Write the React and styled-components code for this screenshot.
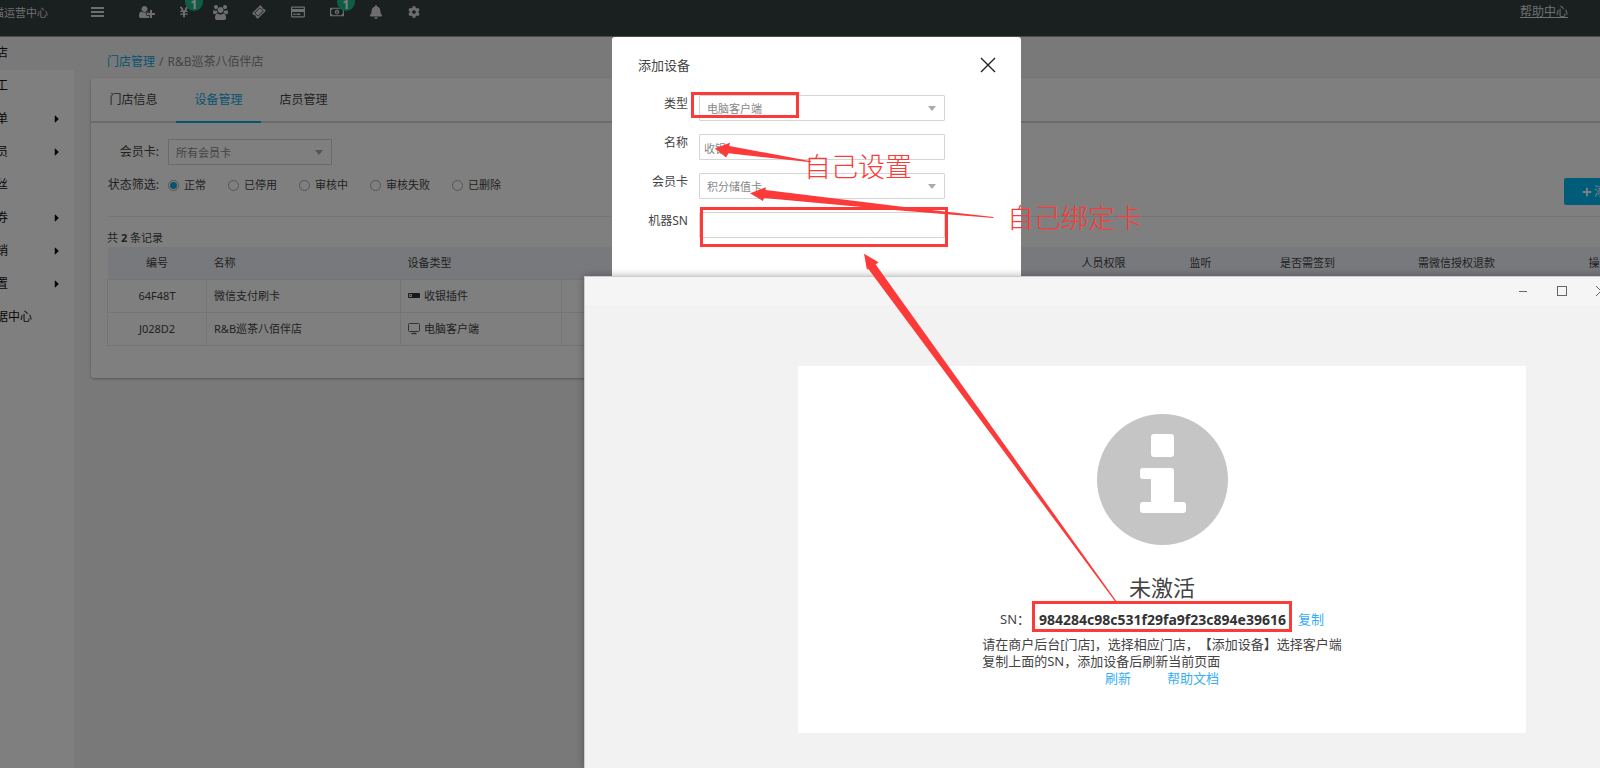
import styled, { createGlobalStyle, css } from "styled-components"
import {
    FaYenSign, FaTicketAlt, FaRegCreditCard,
    FaRegMoneyBillAlt, FaBell, FaCog, FaCaretRight, FaPlus,
} from "react-icons/fa"


const GlobalStyle = createGlobalStyle`
    * {
        box-sizing: border-box;
    }

    body {
        margin: 0;
        overflow: hidden;
        font-family: "Noto Sans", "Noto Sans CJK SC", sans-serif;
        font-size: 12px;
        line-height: 16px;
        color: #444;
        text-spacing-trim: space-all;
    }

    button, input, select {
        font: inherit;
        color: inherit;
    }

    a {
        text-decoration: none;
    }
`

const RED = "#fb3a39"

const Screen = styled.div`
    position: relative;
    min-height: 100vh;
    display: flex;
    flex-direction: column;
    background-color: #f3f3f3;
    overflow: hidden;
`

const Topbar = styled.header`
    height: 37px;
    display: flex;
    align-items: flex-start;
    background-color: #344040;
    border-bottom: 1px solid #999;
    color: #ddd;
`

const Brand = styled.div`
    width: 91px;
    padding-top: 5px;
    display: flex;
`

const BrandName = styled.span`
    margin-left: -7px;
    font-size: 11px;
    white-space: nowrap;
`

const IconButton = styled.button`
    position: relative;
    width: ${({ $wide }) => $wide ? "39px" : "37px"};
    height: 24px;
    padding: 0;
    border: 0;
    background: none;
    font-size: ${({ $small }) => $small ? "12px" : "14px"};
    display: flex;
    align-items: center;
    justify-content: center;
`

const MenuButton = styled(IconButton)`
    justify-content: flex-start;
`

const Badge = styled.span`
    position: absolute;
    left: 20px;
    top: 0;
    width: 18px;
    height: 11px;
    border-radius: 0 0 9px 9px;
    background-color: #20ba8c;
    color: #fff;
    font-size: 12px;
    font-weight: 700;
    line-height: 9px;
    text-align: center;
`

const HelpLink = styled.a`
    margin-left: auto;
    padding: 4px 32px 0 0;
    color: #ddd;
    text-decoration: underline;
`

const Body = styled.div`
    flex: 1;
    display: flex;
`

const Sidebar = styled.nav`
    width: 74px;
    flex-shrink: 0;
    background-color: #fff;
    overflow: hidden;
`

const SideItem = styled.a`
    height: 33px;
    margin-left: -16px;
    padding: 0 11px 1px 0;
    display: flex;
    align-items: center;
    justify-content: space-between;
    white-space: nowrap;
    color: #111;
    background-color: ${({ $active }) => $active ? "#f2f2f2" : "transparent"};
`

const Main = styled.main`
    flex: 1;
    min-width: 0;
    padding: 17px 0 0 17px;
    margin-right: -64px;
`

const Breadcrumb = styled.div`
    display: flex;
    gap: 4px;
    padding: 0 0 8px 16px;
    color: #888;
`

const BlueLink = styled.a`
    color: ${({ $light }) => $light ? "#36aef5" : "#10a8e0"};
`

const Card = styled.section`
    background-color: #fff;
    border-radius: 3px;
    box-shadow: 0 1px 3px rgba(0, 0, 0, 0.3);
`

const Tabs = styled.div`
    display: flex;
    height: 45px;
    border-bottom: 2px solid #d8d8d8;
`

const Tab = styled.button`
    width: 85px;
    height: 45px;
    padding: 0;
    border: 0;
    border-bottom: 2px solid transparent;
    background: none;

    ${({ $active }) => $active && css`
        color: #10a8e0;
        border-bottom-color: #10a8e0;
    `}
`

const CardBody = styled.div`
    padding: 16px 16px 32px;
`

const Filters = styled.form`
    display: flex;
    justify-content: space-between;
    align-items: flex-end;
    padding-bottom: 11px;
    border-bottom: 1px solid #eaeaea;
`

const FilterRow = styled.div`
    display: flex;
    align-items: center;
    height: ${({ $tall }) => $tall ? "26px" : "40px"};
`

const FilterLabel = styled.label`
    width: 52px;
    margin-right: 9px;
    text-align: right;
    white-space: nowrap;
`

const SelectBox = styled.span`
    position: relative;
    display: block;
    width: ${({ $fill }) => $fill ? "100%" : "164px"};

    &::after {
        content: "";
        position: absolute;
        right: 9px;
        top: 11px;
        border: 4px solid transparent;
        border-top: 5px solid #aaa;
        border-bottom: 0;
    }
`

const fieldStyle = css`
    width: 100%;
    height: 26px;
    border: 1px solid #d5d5d5;
    border-radius: 1px;
    background-color: transparent;
    color: #888;
    font-size: 11px;
    outline: none;
`

const Select = styled.select`
    ${fieldStyle}
    appearance: none;
    padding: 2px 7px 0;
`

const TextInput = styled.input`
    ${fieldStyle}
    padding: 2px 4px 0;
`

const RadioLabel = styled.label`
    display: flex;
    align-items: center;
    gap: 5px;
    margin-right: 22px;
    font-size: 11px;
`

const Radio = styled.input`
    appearance: none;
    width: 11px;
    height: 11px;
    margin: 0;
    border: 1px solid #aaa;
    border-radius: 50%;

    &:checked {
        background: radial-gradient(circle, #10a8e0 3px, transparent 4px);
    }
`

const AddButton = styled.button`
    width: 84px;
    height: 27px;
    padding: 0 0 0 18px;
    border: 0;
    border-radius: 2px;
    background-color: #00b8f0;
    color: #fff;
    display: flex;
    align-items: center;
    gap: 2px;
    white-space: nowrap;
`

const RecordCount = styled.p`
    margin: 0;
    padding: 13px 0 1px;
    font-size: 11px;
`

const Table = styled.table`
    width: 100%;
    table-layout: fixed;
    border-collapse: collapse;
    font-size: 11px;
`

const Th = styled.th`
    height: 32px;
    padding: 0 7px;
    background-color: #eff3f8;
    font-weight: 400;
    text-align: ${({ $left }) => $left ? "left" : "center"};
    white-space: nowrap;
`

const Td = styled.td`
    height: 33px;
    padding: 0 7px;
    border: 1px solid #eaeaea;
    text-align: ${({ $left }) => $left ? "left" : "center"};
`

const DeviceType = styled.span`
    display: flex;
    align-items: center;
    gap: 4px;
`

const Overlay = styled.div`
    position: absolute;
    inset: 0;
    display: flex;
    justify-content: center;
    align-items: flex-start;
    padding: 37px 0 0 33px;
    background-color: rgba(0, 0, 0, 0.5);
`

const Modal = styled.section`
    width: 409px;
    min-height: 300px;
    padding: 20px 25px 0 26px;
    border-radius: 3px;
    background-color: #fff;
`

const ModalHead = styled.header`
    display: flex;
    justify-content: space-between;
    align-items: center;
    height: 16px;
    margin-bottom: 22px;
`

const ModalTitle = styled.h2`
    margin: 0;
    font-size: 13px;
    font-weight: 400;
`

const CloseButton = styled.button`
    width: 16px;
    height: 16px;
    padding: 0;
    border: 0;
    background: none;
    display: flex;
`

const Field = styled.div`
    display: grid;
    grid-template-columns: 50px 246px;
    column-gap: 11px;
    margin-bottom: 13px;
`

const FieldLabel = styled.label`
    padding-top: 1px;
    text-align: right;
`

const Client = styled.section`
    position: absolute;
    left: 584px;
    right: -140px;
    top: 276px;
    bottom: 0;
    display: flex;
    flex-direction: column;
    background-color: #f2f2f2;
    border: 1px solid #ccc;
    border-bottom: 0;
    box-shadow: 0 0 8px rgba(0, 0, 0, 0.3);
`

const TitleBar = styled.header`
    height: 28px;
    flex-shrink: 0;
    display: flex;
    justify-content: flex-end;
    gap: 27px;
    padding-right: 132px;
    background-color: #f5f5f5;
`

const WindowButton = styled.button`
    width: 12px;
    padding: 0;
    border: 0;
    background: none;
    display: flex;
    align-items: center;
    justify-content: center;
`

const ClientBody = styled.div`
    flex: 1;
    display: flex;
    padding: 61px 213px 35px;
`

const Panel = styled.div`
    flex: 1;
    padding-top: 48px;
    display: flex;
    flex-direction: column;
    align-items: center;
    background-color: #fff;
    font-size: 13px;
    line-height: 17px;
`

const StatusTitle = styled.h1`
    margin: 28px 0 6px;
    font-size: 22px;
    line-height: 28px;
    font-weight: 400;
`

const SerialRow = styled.div`
    display: flex;
    align-items: center;
    height: 24px;
    margin-bottom: 5px;
`

const Serial = styled.strong`
    margin: 0 12px 0 9px;
    font-size: 14px;
    color: #333;
`

const Hint = styled.p`
    margin: 0;
    white-space: nowrap;
`

const Links = styled.div`
    display: flex;
    gap: 36px;
`

const Marks = styled.div`
    position: absolute;
    inset: 0;
    pointer-events: none;
`

const MarkBox = styled.div`
    position: absolute;
    left: ${({ $x }) => $x}px;
    top: ${({ $y }) => $y}px;
    width: ${({ $w }) => $w}px;
    height: ${({ $h }) => $h}px;
    border: 3px solid ${RED};
`

const MarkText = styled.span`
    position: absolute;
    left: ${({ $x }) => $x}px;
    top: ${({ $y }) => $y}px;
    font-size: 27px;
    line-height: 32px;
    font-weight: 300;
    color: ${RED};
    white-space: nowrap;
`

const Arrows = styled.svg`
    position: absolute;
    left: 0;
    top: 0;
    fill: ${RED};
`


const tools = [
    { name: "会员", Icon: UserPlusIcon },
    { name: "收款", Icon: FaYenSign, badge: 1, small: true },
    { name: "粉丝", Icon: UsersIcon },
    { name: "卡券", Icon: TicketIcon, wide: true, small: true },
    { name: "储值卡", Icon: FaRegCreditCard, wide: true },
    { name: "提现", Icon: FaRegMoneyBillAlt, badge: 1, wide: true },
    { name: "通知", Icon: FaBell, wide: true },
    { name: "设置", Icon: FaCog, small: true },
]

const menu = [
    { name: "门店", active: true },
    { name: "员工" },
    { name: "订单", more: true },
    { name: "会员", more: true },
    { name: "粉丝" },
    { name: "卡券", more: true },
    { name: "营销", more: true },
    { name: "设置", more: true },
    { name: "数据中心" },
]

const states = ["正常", "已停用", "审核中", "审核失败", "已删除"]

const devices = [
    { id: "64F48T", name: "微信支付刷卡", type: "收银插件", Icon: PluginIcon },
    { id: "J028D2", name: "R&B巡茶八佰伴店", type: "电脑客户端", Icon: MonitorIcon },
]

function BarsIcon(){
    return (
        <svg width="13" height="12" viewBox="0 0 13 12" fill="currentColor">
            <path d="M0 1h13v2H0zM0 5h13v2H0zM0 9h13v2H0z" />
        </svg>
    )
}

function UserPlusIcon(){
    return (
        <svg width="16" height="14" viewBox="0 0 2048 1792" fill="currentColor">
            <path d="M704 896q-159 0-271.5-112.5T320 512t112.5-271.5T704 128t271.5 112.5T1088 512 975.5 783.5 704 896zm960 128h352q13 0 22.5 9.5t9.5 22.5v192q0 13-9.5 22.5t-22.5 9.5h-352v352q0 13-9.5 22.5t-22.5 9.5h-192q-13 0-22.5-9.5t-9.5-22.5v-352h-352q-13 0-22.5-9.5t-9.5-22.5v-192q0-13 9.5-22.5t22.5-9.5h352V672q0-13 9.5-22.5t22.5-9.5h192q13 0 22.5 9.5t9.5 22.5v352zm-736 224q0 52 38 90t90 38h256v238q-68 50-171 50H267q-121 0-194-69T0 1405q0-53 3.5-103.5t14-109T44 1084t43-97.5 62-81 85.5-53.5T346 832q19 0 39 17 79 61 154.5 91.5T704 971t164.5-30.5T1023 849q20-17 39-17 132 0 217 96h-223q-52 0-90 38t-38 90v192z" />
        </svg>
    )
}

function UsersIcon(){
    return (
        <svg width="15" height="15" viewBox="0 0 1920 1920" fill="currentColor">
            <path d="M593 1024q-162 5-265 128H194q-82 0-138-40.5T0 993q0-353 124-353 6 0 43.5 21t97.5 42.5T384 725q67 0 133-23-5 37-5 66 0 139 81 256zm1071 637q0 120-73 189.5t-194 69.5H523q-121 0-194-69.5T256 1661q0-53 3.5-103.5t14-109T300 1340t43-97.5 62-81 85.5-53.5T602 1088q10 0 43 21.5t73 48 107 48 135 21.5 135-21.5 107-48 73-48 43-21.5q61 0 111.5 20t85.5 53.5 62 81 43 97.5 26.5 108.5 14 109 3.5 103.5zM640 256q0 106-75 181t-181 75-181-75-75-181 75-181T384 0t181 75 75 181zm704 384q0 159-112.5 271.5T960 1024 688.5 911.5 576 640t112.5-271.5T960 256t271.5 112.5T1344 640zm576 353q0 78-56 118.5t-138 40.5h-134q-103-123-265-128 81-117 81-256 0-29-5-66 66 23 133 23 59 0 119-21.5t97.5-42.5 43.5-21q124 0 124 353zM1792 256q0 106-75 181t-181 75-181-75-75-181 75-181 181-75 181 75 75 181z" />
        </svg>
    )
}

function TicketIcon(){
    return <FaTicketAlt transform="rotate(-45)" />
}

function PluginIcon(){
    return (
        <svg width="12" height="12" viewBox="0 0 12 12">
            <rect x="0" y="3" width="12" height="5" rx="1" fill="#333" />
            <rect x="1" y="4" width="3" height="3" fill="#ddd" />
            <rect x="2" y="5" width="1" height="1" fill="#333" />
        </svg>
    )
}

function MonitorIcon(){
    return (
        <svg width="12" height="12" viewBox="0 0 12 12" fill="none" stroke="#666">
            <rect x="0.5" y="0.5" width="11" height="8" rx="1" />
            <path d="M3.5 10.5h5" strokeWidth="1.5" />
        </svg>
    )
}

function InfoIcon(){
    return (
        <svg width="131" height="131" viewBox="0 0 131 131">
            <circle cx="65.5" cy="65.5" r="65.5" fill="#c5c5c5" />
            <g fill="#fff">
                <rect x="54" y="20" width="23" height="23" rx="3" />
                <path d="M46 54h28a3 3 0 0 1 3 3v31h9a3 3 0 0 1 3 3v5a3 3 0 0 1-3 3H46a3 3 0 0 1-3-3v-5a3 3 0 0 1 3-3h8V65h-8a3 3 0 0 1-3-3v-5a3 3 0 0 1 3-3z" />
            </g>
        </svg>
    )
}

function StorePage(){
    return (
        <>
            <Topbar>
                <Brand><BrandName>猫运营中心</BrandName></Brand>
                <MenuButton aria-label="菜单"><BarsIcon /></MenuButton>
                {tools.map(({ name, Icon, badge, wide, small }) => (
                    <IconButton key={name} aria-label={name} $wide={wide} $small={small}>
                        <Icon />
                        {badge && <Badge>{badge}</Badge>}
                    </IconButton>
                ))}
                <HelpLink href="#help">帮助中心</HelpLink>
            </Topbar>
            <Body>
                <Sidebar>
                    {menu.map(({ name, active, more }) => (
                        <SideItem key={name} href="#menu" $active={active}>
                            {name}
                            {more && <FaCaretRight size={12} />}
                        </SideItem>
                    ))}
                </Sidebar>
                <Main>
                    <Breadcrumb>
                        <BlueLink href="#stores">门店管理</BlueLink>
                        <span>/</span>
                        <span>R&B巡茶八佰伴店</span>
                    </Breadcrumb>
                    <Card>
                        <Tabs>
                            <Tab>门店信息</Tab>
                            <Tab $active>设备管理</Tab>
                            <Tab>店员管理</Tab>
                        </Tabs>
                        <CardBody>
                            <Filters>
                                <div>
                                    <FilterRow $tall>
                                        <FilterLabel htmlFor="card">会员卡:</FilterLabel>
                                        <SelectBox>
                                            <Select id="card"><option>所有会员卡</option></Select>
                                        </SelectBox>
                                    </FilterRow>
                                    <FilterRow>
                                        <FilterLabel as="span">状态筛选:</FilterLabel>
                                        {states.map((state, i) => (
                                            <RadioLabel key={state}>
                                                <Radio type="radio" name="state" defaultChecked={i === 0} />
                                                {state}
                                            </RadioLabel>
                                        ))}
                                    </FilterRow>
                                </div>
                                <AddButton type="button"><FaPlus size={10} />添加设备</AddButton>
                            </Filters>
                            <RecordCount>共 <b>2</b> 条记录</RecordCount>
                            <Table>
                                <colgroup>
                                    <col width="99" />
                                    <col width="194" />
                                    <col width="161" />
                                    <col />
                                    <col width="88" />
                                    <col width="106" />
                                    <col width="108" />
                                    <col width="190" />
                                    <col width="96" />
                                </colgroup>
                                <thead>
                                    <tr>
                                        <Th>编号</Th>
                                        <Th $left>名称</Th>
                                        <Th $left>设备类型</Th>
                                        <Th />
                                        <Th>人员权限</Th>
                                        <Th>监听</Th>
                                        <Th>是否需签到</Th>
                                        <Th>需微信授权退款</Th>
                                        <Th>操作</Th>
                                    </tr>
                                </thead>
                                <tbody>
                                    {devices.map(({ id, name, type, Icon }) => (
                                        <tr key={id}>
                                            <Td>{id}</Td>
                                            <Td $left>{name}</Td>
                                            <Td $left><DeviceType><Icon />{type}</DeviceType></Td>
                                            <Td />
                                            <Td />
                                            <Td />
                                            <Td />
                                            <Td />
                                            <Td />
                                        </tr>
                                    ))}
                                </tbody>
                            </Table>
                        </CardBody>
                    </Card>
                </Main>
            </Body>
        </>
    )
}

function AddDeviceModal(){
    return (
        <Overlay>
            <Modal role="dialog" aria-labelledby="modal-title">
                <ModalHead>
                    <ModalTitle id="modal-title">添加设备</ModalTitle>
                    <CloseButton aria-label="关闭">
                        <svg width="16" height="16" viewBox="0 0 16 16" stroke="#222" strokeWidth="1.4">
                            <path d="M1 1l14 14M15 1L1 15" />
                        </svg>
                    </CloseButton>
                </ModalHead>
                <Field>
                    <FieldLabel htmlFor="type">类型</FieldLabel>
                    <SelectBox $fill>
                        <Select id="type"><option>电脑客户端</option></Select>
                    </SelectBox>
                </Field>
                <Field>
                    <FieldLabel htmlFor="name">名称</FieldLabel>
                    <TextInput id="name" defaultValue="收银" />
                </Field>
                <Field>
                    <FieldLabel htmlFor="member">会员卡</FieldLabel>
                    <SelectBox $fill>
                        <Select id="member"><option>积分储值卡</option></Select>
                    </SelectBox>
                </Field>
                <Field>
                    <FieldLabel htmlFor="sn">机器SN</FieldLabel>
                    <TextInput id="sn" />
                </Field>
            </Modal>
        </Overlay>
    )
}

function ClientWindow(){
    return (
        <Client>
            <TitleBar>
                <WindowButton aria-label="最小化">
                    <svg width="10" height="10" stroke="#666"><path d="M1 5.5h8" /></svg>
                </WindowButton>
                <WindowButton aria-label="最大化">
                    <svg width="10" height="10" fill="none" stroke="#666"><rect x="0.5" y="0.5" width="9" height="9" /></svg>
                </WindowButton>
                <WindowButton aria-label="关闭">
                    <svg width="10" height="10" stroke="#666"><path d="M0 0l10 10M10 0L0 10" /></svg>
                </WindowButton>
            </TitleBar>
            <ClientBody>
                <Panel>
                    <InfoIcon />
                    <StatusTitle>未激活</StatusTitle>
                    <SerialRow>
                        SN：
                        <Serial>984284c98c531f29fa9f23c894e39616</Serial>
                        <BlueLink $light href="#copy">复制</BlueLink>
                    </SerialRow>
                    <Hint>
                        请在商户后台[门店]，选择相应门店，【添加设备】选择客户端<br />
                        复制上面的SN，添加设备后刷新当前页面
                    </Hint>
                    <Links>
                        <BlueLink $light href="#refresh">刷新</BlueLink>
                        <BlueLink $light href="#docs">帮助文档</BlueLink>
                    </Links>
                </Panel>
            </ClientBody>
        </Client>
    )
}

export default function App(){
    return (
        <Screen>
            <GlobalStyle />
            <StorePage />
            <AddDeviceModal />
            <ClientWindow />
            <Marks>
                <MarkBox $x={691} $y={92} $w={108} $h={26} />
                <MarkBox $x={700} $y={207} $w={248} $h={40} />
                <MarkBox $x={1032} $y={601} $w={260} $h={31} />
                <Arrows width="1200" height="640">
                    <path d="M715 148.3L730 142.7L729.3 146L811 161.2V162.2L728.5 153.3L726 157.5Z" />
                    <path d="M750 193.3L765.7 187.3V190L900 206.5L993.5 217V218L900 210.5L764 198L763 201Z" />
                    <path d="M864 253.7L878.5 262.3L875.7 264.5L1117 602H1115.5L868 268.5L867 270Z" />
                </Arrows>
                <MarkText $x={804} $y={151}>自己设置</MarkText>
                <MarkText $x={1007} $y={202}>自己绑定卡</MarkText>
            </Marks>
        </Screen>
    )
}
